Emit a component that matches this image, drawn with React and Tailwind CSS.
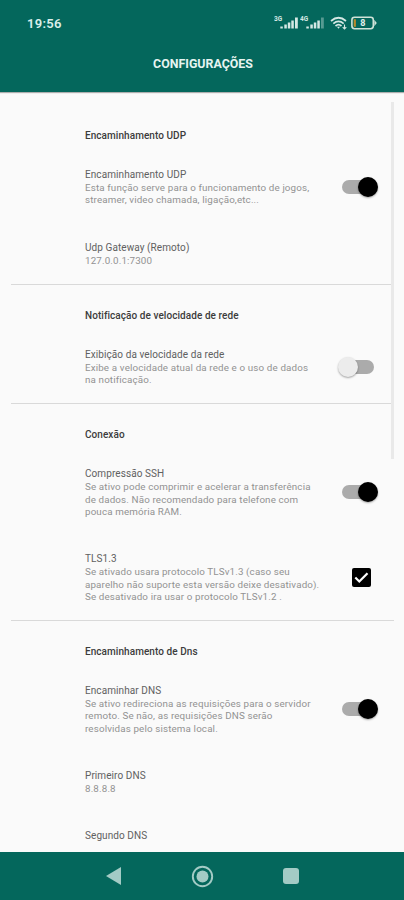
import clsx from 'clsx';

const sections = [
  {
    title: 'Encaminhamento UDP',
    items: [
      {
        title: 'Encaminhamento UDP',
        lines: ['Esta função serve para o funcionamento de jogos,', 'streamer, video chamada, ligação,etc...'],
        control: 'switch',
        on: true,
      },
      { title: 'Udp Gateway (Remoto)', lines: ['127.0.0.1:7300'] },
    ],
  },
  {
    title: 'Notificação de velocidade de rede',
    items: [
      {
        title: 'Exibição da velocidade da rede',
        lines: ['Exibe a velocidade atual da rede e o uso de dados', 'na notificação.'],
        control: 'switch',
        on: false,
      },
    ],
  },
  {
    title: 'Conexão',
    items: [
      {
        title: 'Compressão SSH',
        lines: ['Se ativo pode comprimir e acelerar a transferência', 'de dados. Não recomendado para telefone com', 'pouca memória RAM.'],
        control: 'switch',
        on: true,
      },
      {
        title: 'TLS1.3',
        lines: ['Se ativado usara protocolo TLSv1.3 (caso seu', 'aparelho não suporte esta versão deixe desativado).', 'Se desativado ira usar o protocolo TLSv1.2 .'],
        control: 'checkbox',
      },
    ],
  },
  {
    title: 'Encaminhamento de Dns',
    items: [
      {
        title: 'Encaminhar DNS',
        lines: ['Se ativo redireciona as requisições para o servidor', 'remoto. Se não, as requisições DNS serão', 'resolvidas pelo sistema local.'],
        control: 'switch',
        on: true,
      },
      { title: 'Primeiro DNS', lines: ['8.8.8.8'] },
      { title: 'Segundo DNS', lines: [] },
    ],
  },
];

function Signal({ label, dim }) {
  return (
    <svg className="h-4 w-[26px]" viewBox="0 0 26 16" fill="#d5e8e4">
      <text x="0" y="6" fontSize="6.5" fontWeight="700" fontFamily="Roboto, sans-serif">{label}</text>
      <rect x="6.3" y="11.5" width="2.5" height="2" />
      <rect x="10.3" y="9.5" width="2.5" height="4" />
      <rect x="13.8" y="7.5" width="2.5" height="6" />
      <rect x="17.3" y="5.5" width="2.5" height="8" />
      <rect x="21" y="2.5" width="2.8" height="11" opacity={dim ? 0.4 : 1} />
    </svg>
  );
}

function StatusBar() {
  return (
    <div className="flex h-[46px] items-center pl-[27px] pr-[27px]">
      <span className="pt-px text-[13px] font-semibold tracking-[0.3px] text-[#dcefeb]">19:56</span>
      <div className="ml-auto flex items-center">
        <Signal label="3G" />
        <Signal label="4G" dim />
        <svg className="ml-[4px] h-4 w-[18px]" viewBox="0 0 18 16" fill="none" stroke="#d5e8e4" strokeWidth="1.7">
          <path d="M1 6 Q8.5 -0.5 16 6" />
          <path d="M3.3 8.7 Q8.5 4.2 13.7 8.7" />
          <path d="M5.5 11 Q8.5 8.4 11.5 11" />
          <path d="M7 11.8h3L8.5 13.8z" fill="#d5e8e4" stroke="none" />
          <path d="M14.5 9.5v4.3M12.7 12.2l1.8 1.8 1.8-1.8" strokeWidth="1.1" />
        </svg>
        <svg className="ml-[3px] h-[14px] w-[26px]" viewBox="0 0 26 14">
          <rect x="0.9" y="1.3" width="21.4" height="11.4" rx="2.6" fill="none" stroke="#cfe3d8" strokeWidth="1.6" />
          <path d="M23.3 3.8l2.5 3.2-2.5 3.2z" fill="#cfe3d8" />
          <rect x="2.7" y="3.2" width="2.2" height="7.6" fill="#b88a2a" />
          <text x="9.3" y="10.3" fontSize="9" fontWeight="700" fontFamily="Roboto, sans-serif" fill="#e1f0ec">8</text>
        </svg>
      </div>
    </div>
  );
}

function Switch({ on }) {
  return (
    <span className="relative block h-[14px] w-8 rounded-full bg-[#ababab]">
      <span
        className={clsx(
          'absolute -top-[3px] size-5 rounded-full shadow-[0_1px_2px_rgba(0,0,0,0.35)]',
          on ? 'left-4 bg-black' : '-left-1 bg-[#ececec]'
        )}
      />
    </span>
  );
}

function Checkbox() {
  return (
    <svg className="ml-[10px] size-[19px]" viewBox="0 0 19 19">
      <rect width="19" height="19" rx="2" fill="#000" />
      <path d="M3.3 9.5l4 4 8.2-8.3" fill="none" stroke="#fff" strokeWidth="2.2" />
    </svg>
  );
}

function Item({ item }) {
  return (
    <div className="flex items-center py-[16.6px] pl-[85px]">
      <div className="w-[257px] shrink-0 whitespace-nowrap">
        <p className="text-[10px] leading-[15px] tracking-[0.08px] text-[#606060]">{item.title}</p>
        {item.lines.map((line) => (
          <p key={line} className="text-[9.8px] leading-[12.25px] tracking-[0.14px] text-[#929292]">{line}</p>
        ))}
      </div>
      {item.control === 'switch' && <Switch on={item.on} />}
      {item.control === 'checkbox' && <Checkbox />}
    </div>
  );
}

export default function App() {
  return (
    <div className="flex h-[900px] w-[404px] flex-col overflow-hidden bg-[#fafafa] font-['Roboto',sans-serif]">
      <header className="h-[92px] shrink-0 bg-[#04675c] shadow-[0_1px_1px_rgba(0,0,0,0.3)]">
        <StatusBar />
        <h1 className="pt-[9px] pl-[2px] text-center text-[12.4px] leading-[18px] font-bold text-[#e6f4f1]">CONFIGURAÇÕES</h1>
      </header>

      <main className="relative min-h-0 flex-1 overflow-hidden pt-[12.6px]">
        {sections.map((section, i) => (
          <section key={section.title}>
            {i > 0 && <div className="mr-[10px] ml-[11px] h-px bg-[#d9d9d9]" />}
            <h2 className="pt-[24.2px] pb-[7.6px] pl-[85px] text-[10px] leading-[14px] font-medium tracking-[0.06px] text-[#3c3c3c]">
              {section.title}
            </h2>
            {section.items.map((item) => <Item key={item.title} item={item} />)}
          </section>
        ))}
        {/* Scrollbar */}
        <span className="absolute top-[10px] right-[10px] h-[357px] w-[3px] bg-[#e9e9e9]" />
      </main>

      <nav className="flex h-12 shrink-0 items-center bg-[#04675c] pl-[106px]">
        <svg className="h-[18px] w-[15px]" viewBox="0 0 15 18" fill="#a3cbc5"><path d="M0 9L15 0v18z" /></svg>
        <svg className="ml-[70px] size-[23px]" viewBox="0 0 23 23">
          <circle cx="11.5" cy="11.5" r="9.7" fill="none" stroke="#a3cbc5" strokeWidth="1.9" />
          <circle cx="11.5" cy="11.5" r="6" fill="#a3cbc5" />
        </svg>
        <span className="ml-[69px] size-4 rounded-[3px] bg-[#a3cbc5]" />
      </nav>
    </div>
  );
}
